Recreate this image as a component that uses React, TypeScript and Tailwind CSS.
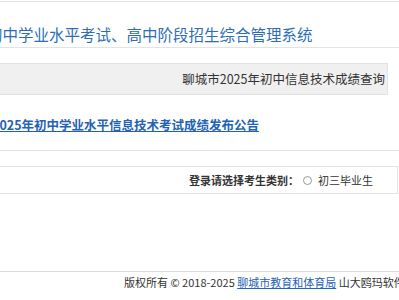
const font = { fontFamily: '"Noto Sans CJK SC", "Liberation Sans", sans-serif' }

export default function App() {
  return (
    <div className="relative h-[300px] w-[399px] overflow-hidden bg-white text-[#333]" style={font}>
      {/* header */}
      <div className="mt-px h-[47px] border-y border-[#e3e3e3]">
        <div className="ml-[-13px] whitespace-nowrap pt-[20px] text-[15.5px] leading-[24px] text-[#2d6db8]">
          初中学业水平考试、高中阶段招生综合管理系统
        </div>
      </div>

      {/* gray bar */}
      <div className="mt-[15px] flex h-[32px] w-[388px] items-center justify-end border border-l-0 border-[#e2e2e2] bg-[#f0f0f0] pr-[2px] text-[12.5px]">
        聊城市2025年初中信息技术成绩查询
      </div>

      {/* announcement */}
      <div className="h-[56px] border-b border-[#e3e3e3] pt-[16px]">
        <a className="ml-[-8px] whitespace-nowrap text-[12.5px] font-bold leading-[18px] text-[#1f63b5] underline">
          2025年初中学业水平信息技术考试成绩发布公告
        </a>
      </div>

      {/* category */}
      <div className="mt-[15px] flex h-[28px] w-[398px] items-center justify-end border border-l-0 border-[#e3e3e3] pr-[24px] text-[11px]">
        <span className="font-bold">登录请选择考生类别：</span>
        <span className="ml-[4px] mr-[6px] h-[9px] w-[9px] rounded-full border border-[#999]" />
        <span>初三毕业生</span>
      </div>

      {/* footer */}
      <div className="mt-[77px] border-t border-[#dcdcdc] pl-[124px] pt-[2px] text-[11px] leading-[16px] whitespace-nowrap">
        版权所有 © 2018-2025 <a className="text-[#1f63b5] underline">聊城市教育和体育局</a> 山大鸥玛软件
      </div>
    </div>
  )
}
